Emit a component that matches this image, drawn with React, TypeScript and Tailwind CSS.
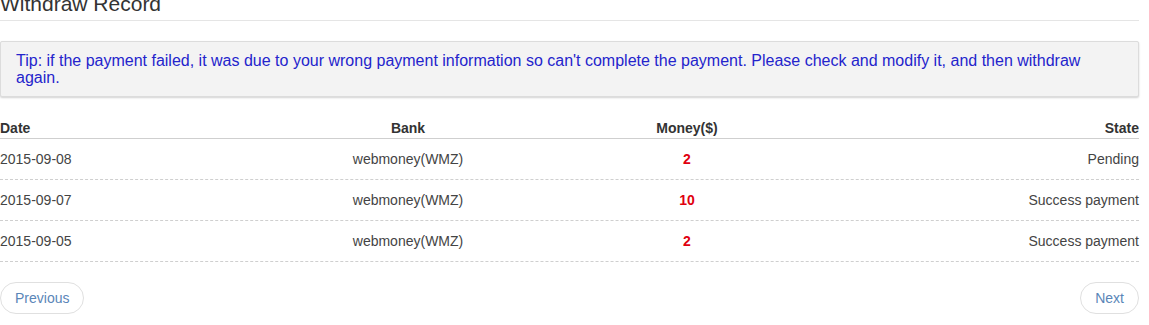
import React from "react";

const rows = [
  { date: "2015-09-08", bank: "webmoney(WMZ)", money: "2", state: "Pending" },
  { date: "2015-09-07", bank: "webmoney(WMZ)", money: "10", state: "Success payment" },
  { date: "2015-09-05", bank: "webmoney(WMZ)", money: "2", state: "Success payment" },
];

export default function App() {
  return (
    <div className="w-[1149px] h-[325px] overflow-hidden bg-white font-['Liberation_Sans',Arial,sans-serif] text-[#333]">
      <div className="w-[1139px]">
        <div className="border-b border-[#e5e5e5] h-[21px] flex items-end">
          <h2 className="text-[21px] leading-[24px] text-[#333] mb-[4px] whitespace-nowrap">Withdraw Record</h2>
        </div>
        <div className="mt-[20px] border border-[#dcdcdc] bg-[#f3f3f3] rounded-[2px] shadow-[0_1px_2px_rgba(0,0,0,0.18)] pl-[15px] pr-[40px] py-[10px] text-[16px] leading-[17px] text-[#2424cc]">
          Tip: if the payment failed, it was due to your wrong payment information so can't complete the payment. Please check and modify it, and then withdraw again.
        </div>
        <div className="mt-[21px]">
          <div className="grid grid-cols-[272px_272px_286px_1fr] border-b border-[#cfcfcf] text-[14px] font-bold leading-[16px] pt-[2px] pb-[2px] text-[#333]">
            <div>Date</div>
            <div className="text-center">Bank</div>
            <div className="text-center">Money($)</div>
            <div className="text-right">State</div>
          </div>
          {rows.map((r, i) => (
            <div key={i} className="grid grid-cols-[272px_272px_286px_1fr] items-center h-[41px] border-b border-dashed border-[#cfcfcf] text-[14px] text-[#444]">
              <div>{r.date}</div>
              <div className="text-center">{r.bank}</div>
              <div className="text-center text-[14px] font-bold text-[#e0000f]">{r.money}</div>
              <div className="text-right">{r.state}</div>
            </div>
          ))}
        </div>
        <div className="mt-[20px] flex justify-between">
          <button className="h-[32px] px-[14px] rounded-full border border-[#e0e0e0] bg-white text-[14px] text-[#5a86b8]">Previous</button>
          <button className="h-[32px] px-[14px] rounded-full border border-[#e0e0e0] bg-white text-[14px] text-[#5a86b8]">Next</button>
        </div>
      </div>
    </div>
  );
}
